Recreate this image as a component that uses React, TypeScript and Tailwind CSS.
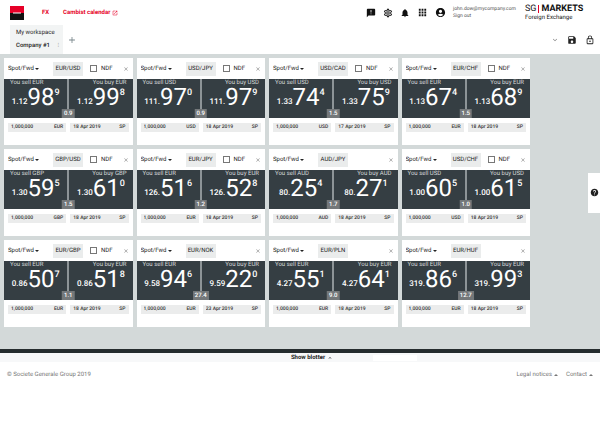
import React from "react";
import {
  MdAccountCircle,
  MdAdd,
  MdAnnouncement,
  MdApps,
  MdClose,
  MdExpandLess,
  MdExpandMore,
  MdHelp,
  MdLockOutline,
  MdNotifications,
  MdOpenInNew,
  MdOutlineSettings,
  MdSave,
} from "react-icons/md";

type Quote = { base: string; pips: string; frac: string };
type Tile = {
  pair: string;
  ndf: boolean;
  sell: Quote;
  buy: Quote;
  spread: string;
  date: string;
};

function tile(pair: string, ndf: boolean, sell: string, buy: string, spread: string, date = "18 Apr 2019"): Tile {
  const parse = (text: string): Quote => {
    const [base, pips, frac] = text.split(" ");
    return { base, pips, frac };
  };
  return { pair, ndf, sell: parse(sell), buy: parse(buy), spread, date };
}

const tiles: Tile[] = [
  tile("EUR/USD", true, "1.12 98 9", "1.12 99 8", "0.9"),
  tile("USD/JPY", true, "111. 97 0", "111. 97 9", "0.9"),
  tile("USD/CAD", true, "1.33 74 4", "1.33 75 9", "1.5", "17 Apr 2019"),
  tile("EUR/CHF", true, "1.13 67 4", "1.13 68 9", "1.5"),
  tile("GBP/USD", true, "1.30 59 5", "1.30 61 0", "1.5"),
  tile("EUR/JPY", true, "126. 51 6", "126. 52 8", "1.2"),
  tile("AUD/JPY", false, "80. 25 4", "80. 27 1", "1.7"),
  tile("USD/CHF", true, "1.00 60 5", "1.00 61 5", "1.0"),
  tile("EUR/GBP", true, "0.86 50 7", "0.86 51 8", "1.1"),
  tile("EUR/NOK", false, "9.58 94 6", "9.59 22 0", "27.4", "23 Apr 2019"),
  tile("EUR/PLN", false, "4.27 55 1", "4.27 64 1", "9.0"),
  tile("EUR/HUF", false, "319. 86 6", "319. 99 3", "12.7"),
];

function Caret({ up = false }: { up?: boolean }) {
  return (
    <svg viewBox="0 0 4 2" className="h-[2px] w-1 shrink-0" fill="currentColor" aria-hidden="true">
      <path d={up ? "M0 2L2 0L4 2Z" : "M0 0L2 2L4 0Z"} />
    </svg>
  );
}

function Price({ side, currency, quote }: { side: "sell" | "buy"; currency: string; quote: Quote }) {
  return (
    <button
      type="button"
      className="flex h-[39px] min-w-0 flex-1 flex-col overflow-hidden bg-[#353e43] text-white"
    >
      <span
        className={
          side === "sell"
            ? "w-full px-[6px] text-left text-[6px] leading-[8px] text-[#d5d9da]"
            : "w-full px-[6px] text-right text-[6px] leading-[8px] text-[#d5d9da]"
        }
      >
        You {side} {currency}
      </span>
      <span className="flex w-full items-start justify-center">
        <span className="pt-[10px] text-[8px] leading-[10px] font-medium">{quote.base}</span>
        <span className="text-[24px] leading-[20px]">{quote.pips}</span>
        <span className="pt-px text-[9px] leading-[10px] font-medium">{quote.frac}</span>
      </span>
    </button>
  );
}

function CurrencyTile({ data }: { data: Tile }) {
  const currency = data.pair.slice(0, 3);
  return (
    <article className="flex h-[87px] flex-col bg-white">
      <div className="flex h-[21px] items-center px-1 text-[6px] leading-[10px] text-[#222]">
        <div className="flex w-[45px] items-center gap-px">
          <select
            aria-label={`${data.pair} product`}
            className="field-sizing-content appearance-none bg-transparent"
          >
            <option>Spot/Fwd</option>
          </select>
          <Caret />
        </div>
        <button type="button" className="h-[14px] w-[30px] bg-[#eaecec]">
          {data.pair}
        </button>
        {data.ndf && (
          <label className="flex items-center gap-1 pl-[7px]">
            <input type="checkbox" className="size-[7px] appearance-none border border-[#777] bg-white" />
            NDF
          </label>
        )}
        <button type="button" aria-label={`Close ${data.pair}`} className="ml-auto text-[#777]">
          <MdClose className="size-[6px]" />
        </button>
      </div>
      <div className="relative flex gap-[2px] bg-[#8d9497]">
        <Price side="sell" currency={currency} quote={data.sell} />
        <Price side="buy" currency={currency} quote={data.buy} />
        <span className="absolute bottom-0 left-1/2 min-w-3 -translate-x-1/2 bg-[#74787a] px-[2px] text-center text-[6px] leading-[9px] font-medium text-white">
          {data.spread}
        </span>
      </div>
      <div className="flex gap-1 px-1 pt-[5px] text-[5px] leading-[9px] font-medium text-[#333]">
        <label className="flex min-w-0 flex-1 justify-between bg-[#ebecec] px-[3px]">
          <input
            aria-label={`${data.pair} amount`}
            defaultValue="1,000,000"
            className="h-[9px] w-8 bg-transparent"
          />
          {currency}
        </label>
        <label className="flex min-w-0 flex-1 justify-between bg-[#ebecec] px-[3px]">
          <input
            aria-label={`${data.pair} value date`}
            defaultValue={data.date}
            className="h-[9px] w-9 bg-transparent"
          />
          SP
        </label>
      </div>
    </article>
  );
}

function Header() {
  return (
    <header className="flex h-[25px] items-center pl-[10px]">
      <svg viewBox="0 0 14 14" className="size-[14px]" role="img" aria-label="Societe Generale">
        <rect width="14" height="7" fill="#e60028" />
        <rect y="7" width="14" height="7" fill="#111" />
        <rect x="3" y="6.5" width="8" height="1" fill="#fff" />
      </svg>
      <nav className="flex items-center gap-[14px] pl-[18px] text-[6px] leading-[10px] font-bold text-[#e60028]">
        <a href="#fx">FX</a>
        <a href="#calendar" className="flex items-center gap-[2px]">
          Cambist calendar
          <MdOpenInNew className="size-[6px]" />
        </a>
      </nav>
      <div className="ml-auto flex items-center gap-[7px] text-[#111]">
        <button type="button" aria-label="Feedback"><MdAnnouncement className="size-[10px]" /></button>
        <button type="button" aria-label="Settings"><MdOutlineSettings className="size-[10px]" /></button>
        <button type="button" aria-label="Notifications"><MdNotifications className="size-[10px]" /></button>
        <button type="button" aria-label="Applications"><MdApps className="size-[11px]" /></button>
        <button type="button" aria-label="Account"><MdAccountCircle className="size-[11px]" /></button>
      </div>
      <div className="flex w-[79px] flex-col items-start pl-[7px] text-[5px] leading-[7px] text-[#555]">
        <span>john.dow@mycompany.com</span>
        <a href="#signout">Sign out</a>
      </div>
      <div className="w-[75px] text-[#111]">
        <div className="flex items-center text-[9px] leading-[10px]">
          SG
          <span className="mx-[2px] h-[8px] w-px bg-[#e60028]" />
          <span className="font-bold">MARKETS</span>
        </div>
        <div className="text-[6px] leading-[7px]">Foreign Exchange</div>
      </div>
    </header>
  );
}

function WorkspaceBar() {
  return (
    <div className="flex h-[29px] items-center pr-[5px] pl-[10px] text-[#222]">
      <div className="flex h-[29px] w-[53px] flex-col justify-center gap-[3px] bg-[#f2f4f4] pl-[6px] text-[6px] leading-[10px]">
        <span>My workspace</span>
        <span className="flex items-center justify-between pr-1 font-medium">
          Company #1
          <button type="button" aria-label="Workspace menu" className="font-normal text-[#888]">⁝</button>
        </span>
      </div>
      <button type="button" aria-label="Add workspace" className="pl-1 text-[#78868b]">
        <MdAdd className="size-[10px]" />
      </button>
      <div className="ml-auto flex items-center gap-2">
        <button type="button" aria-label="Expand" className="text-[#777]"><MdExpandMore className="size-[8px]" /></button>
        <button type="button" aria-label="Save"><MdSave className="size-[10px]" /></button>
        <button type="button" aria-label="Lock"><MdLockOutline className="size-[10px]" /></button>
      </div>
    </div>
  );
}

export default function App() {
  return (
    <div className="bg-white font-[Roboto,sans-serif] [text-rendering:geometricPrecision] [&_input]:[text-rendering:geometricPrecision] [&_select]:[text-rendering:geometricPrecision] [&_button]:[text-rendering:geometricPrecision]">
      <Header />
      <WorkspaceBar />
      <main className="flex bg-[#d3d9d9] pt-1 pb-[22px] pl-1">
        <div className="grid flex-1 grid-cols-4 gap-1">
          {tiles.map((data) => (
            <CurrencyTile key={data.pair} data={data} />
          ))}
        </div>
        <aside className="flex w-[70px] items-center justify-end">
          <button
            type="button"
            aria-label="Help"
            className="flex h-10 w-3 items-center justify-center bg-white text-[#222]"
          >
            <MdHelp className="size-[9px]" />
          </button>
        </aside>
      </main>
      <div className="flex h-[13px] items-end border-t-4 border-[#252c2e] bg-[#f7f8f9]">
        <div className="flex-1" />
        <button type="button" className="flex h-[9px] items-center gap-[2px] pl-6 text-[6px] leading-[9px] font-bold text-[#222]">
          Show blotter
          <MdExpandLess className="size-[6px]" />
        </button>
        <div className="flex-1">
          <div className="mb-px ml-10 h-[6px] w-11 bg-white" />
        </div>
      </div>
      <footer className="flex justify-between px-[7px] pt-2 text-[6px] leading-[10px] text-[#777]">
        <span>© Societe Generale Group 2019</span>
        <nav className="flex gap-2">
          <a href="#legal" className="flex items-center gap-[2px]">Legal notices <Caret up /></a>
          <a href="#contact" className="flex items-center gap-[2px]">Contact <Caret up /></a>
        </nav>
      </footer>
    </div>
  );
}
